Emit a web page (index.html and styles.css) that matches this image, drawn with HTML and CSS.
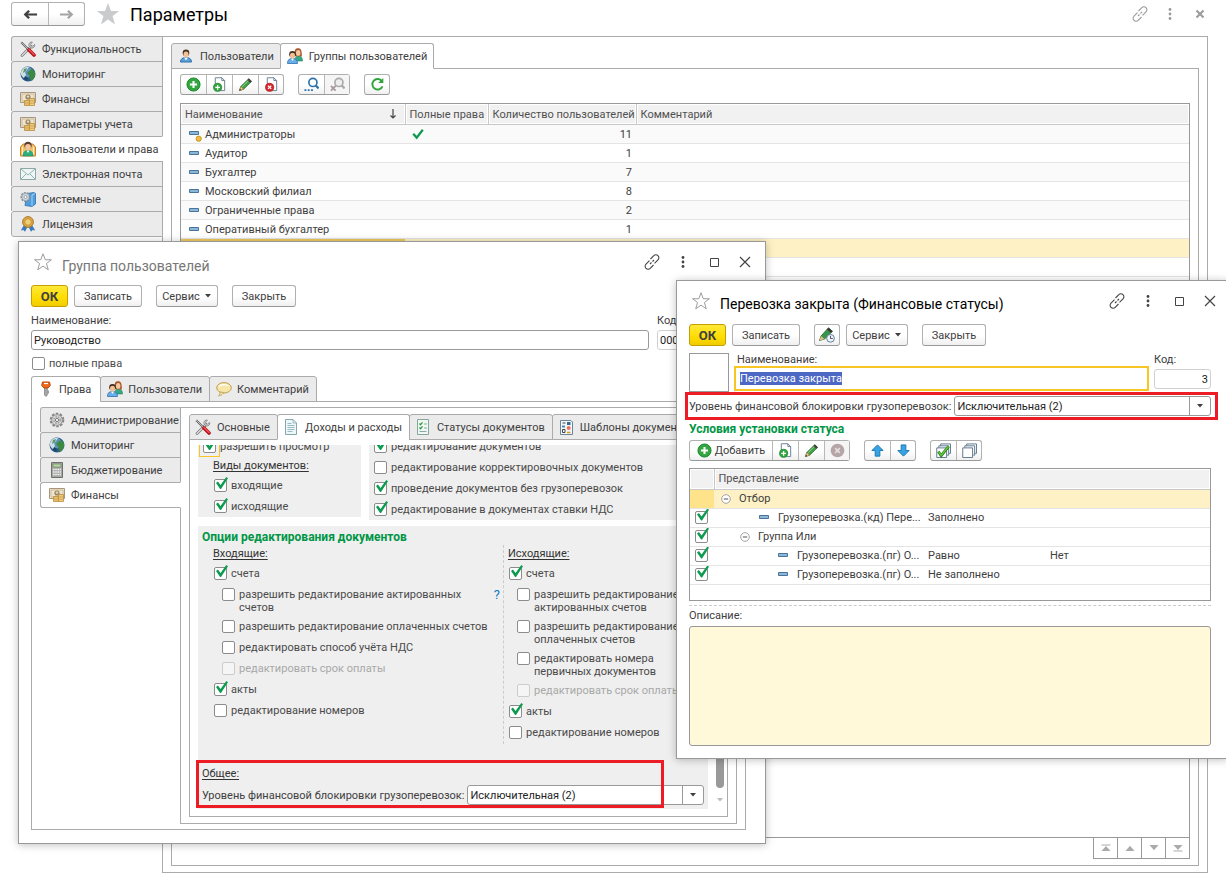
FILE: index.html
```html
<!DOCTYPE html>
<html lang="ru">
<head>
<meta charset="utf-8">
<title>Параметры</title>
<link rel="stylesheet" href="styles.css">
</head>
<body>
<svg class="sprite" aria-hidden="true">
  <symbol id="tools" viewBox="0 0 16 16"><path d="M2 14.500 11 5.500" stroke="#777" stroke-width="2.600" stroke-linecap="round"/><path d="M2 14.500 11 5.500" stroke="#ddd" stroke-width="1.200" stroke-linecap="round"/><path d="M14.600 3.400 12.600 5.200 10.900 4.900 10.600 3.200 12.400 1.200C10.600 .6 8.600 2 8.900 4.500L11 7c2.600.3 4.300-1.600 3.600-3.600Z" fill="#ddd" stroke="#777" stroke-width=".8"/><path d="M1.200 1.200 8.500 8.500" stroke="#666" stroke-width="2"/><path d="M1.200 1.200 8.500 8.500" stroke="#ccc" stroke-width=".8"/><path d="M9 9l5 5" stroke="#b51217" stroke-width="3.600" stroke-linecap="round"/><path d="M9 8.600l5 5" stroke="#f0555a" stroke-width="1.400" stroke-linecap="round"/></symbol>
  <symbol id="globe" viewBox="0 0 16 16"><circle cx="8" cy="8" r="7.500" fill="#2c5f8c"/><circle cx="7" cy="6" r="5.500" fill="#5b93b8"/><path d="M2 4C4 1 7 .5 9 1L7 4 5 6 6 9 4 12C1 10 0 7 2 4Z" fill="#cfe0e4"/><path d="M9 5l3-2 3 3v4l-3 5-2-2-1-4-2-2Z" fill="#3c8a3f"/><path d="M4 3l3-1-1 3-3 2Z" fill="#5a966a"/><path d="M5 10l3 2-1 3-3-2Z" fill="#1f4468"/></symbol>
  <symbol id="money" viewBox="0 0 16 16"><path d="M.5 1.500h15v10H.5Z" fill="#eee4cf" stroke="#a8977a"/><path d="M2 3h12v7H2Z" fill="none" stroke="#c2b294" stroke-width=".8"/><circle cx="8" cy="6" r="2.600" fill="#9a8663"/><circle cx="8" cy="5.600" r="1.200" fill="#e9dcc0"/><path d="M4.500 9.500h5v5h-5Z" fill="#f2cb76" stroke="#b98a3c" stroke-width=".8"/><path d="M9.500 7.500h5v7h-5Z" fill="#f8d98c" stroke="#b98a3c" stroke-width=".8"/><path d="M4.500 11.200h5M4.500 12.900h5M9.500 9.200h5M9.500 10.900h5M9.500 12.700h5" stroke="#c79a48" stroke-width=".8"/></symbol>
  <symbol id="usersec" viewBox="0 0 16 16"><path d="M.5 6 3 3h10l2.500 3v9H.5Z" fill="#f5c065" stroke="#c9852b"/><path d="M2.500 6v8M13.500 6v8" stroke="#fff0c9"/><circle cx="8" cy="4.500" r="3.700" fill="#5d4030"/><circle cx="8" cy="6" r="2.900" fill="#f3c79b"/><path d="M3 15c0-4 2-5.500 5-5.500s5 1.500 5 5.500Z" fill="#2fae7d" stroke="#1c8a60" stroke-width=".6"/><path d="M6.500 9.500 8 12l1.500-2.500Z" fill="#fff"/></symbol>
  <symbol id="mail" viewBox="0 0 16 16"><path d="M.5 2.500h15v11H.5Z" fill="#eef5f4" stroke="#8fa9a9"/><path d="M1 3l7 6 7-6M1 13l5-5M15 13l-5-5" fill="none" stroke="#8fb5b0"/></symbol>
  <symbol id="system" viewBox="0 0 16 16"><path d="M7 2.500 14 1.500l1.500 1V13L12 15.500 5 14.500Z" fill="#4f9fe0" stroke="#2d6ea8" stroke-width=".8"/><path d="M12 4v11M12 4l3-1.500" stroke="#b7dcf8" stroke-width=".8"/><circle cx="5.500" cy="6" r="4.300" fill="#c3cbd2" stroke="#7f8b95" stroke-width="1.400" stroke-dasharray="2 1"/><circle cx="5.500" cy="6" r="3.600" fill="#d5dce2" stroke="#8a959e" stroke-width=".6"/><circle cx="5.500" cy="6" r="1.500" fill="#fff" stroke="#76818a" stroke-width=".7"/></symbol>
  <symbol id="award" viewBox="0 0 16 16"><path d="M4 9 .8 14.500l2.700-.5L5 15.800 7.500 11M12 9l3.200 5.500-2.700-.5-1.500 1.800L8.500 11" fill="#3979bd"/><circle cx="8" cy="6" r="5.400" fill="#dfa840" stroke="#a8792a"/><circle cx="8" cy="6" r="3.300" fill="#f1cd78" stroke="#b98a35" stroke-width=".8"/></symbol>
  <symbol id="user" viewBox="0 0 16 16"><path d="M2.500 14c0-3 2-4.500 5.500-4.500s5.500 1.500 5.500 4.500Z" fill="#5aa0dc" stroke="#2f6fae"/><path d="M6 9.500l2 3 2-3Z" fill="#fff"/><circle cx="8" cy="4.900" r="3.300" fill="#4a3024"/><ellipse cx="8" cy="6.300" rx="2.500" ry="2.900" fill="#f1c093"/></symbol>
  <symbol id="users" viewBox="0 0 16 16"><path d="M8 13c0-4 1-5 3.500-5s4 1.500 4 5Z" fill="#36a884" stroke="#1c8462" stroke-width=".6"/><path d="M7.500 8C7 2 8.500.3 11.200.3S15 2.500 14.800 8.500Z" fill="#a9572c"/><ellipse cx="11.200" cy="4.900" rx="2.200" ry="2.900" fill="#f4c9a0"/><path d="M.5 15.500c0-3.500 1.500-5 5-5s5 1.500 5 5Z" fill="#6aaee6" stroke="#2d6fb1" stroke-width=".8"/><path d="M4 10.500l1.500 2.600L7 10.500Z" fill="#fff"/><circle cx="5.500" cy="6.300" r="3.300" fill="#3d2b23"/><ellipse cx="5.500" cy="7.600" rx="2.500" ry="2.800" fill="#f1c093"/></symbol>
  <symbol id="add" viewBox="0 0 16 16"><circle cx="8" cy="8" r="7" fill="#34a63f" stroke="#16842b"/><path d="M8 4.200v7.600M4.200 8h7.600" stroke="#fff" stroke-width="2.200"/></symbol>
  <symbol id="copy" viewBox="0 0 16 16"><path d="M3.500.8h7l3 3v10.700h-10Z" fill="#fff" stroke="#667d92"/><path d="M10.500.8v3h3" fill="none" stroke="#667d92"/><circle cx="6" cy="11" r="4.300" fill="#34a63f" stroke="#16842b" stroke-width=".8"/><path d="M6 8.500v5M3.500 11h5" stroke="#fff" stroke-width="1.400"/></symbol>
  <symbol id="pencil" viewBox="0 0 16 16"><path d="M1.500 14.500 3 10 11.500 1.800l3 3L6 13Z" fill="#42a047" stroke="#2a6d31" stroke-width=".8"/><path d="M1.500 14.500 3 10l3 3Z" fill="#f1c990" stroke="#9a713c" stroke-width=".6"/><path d="M1.500 14.500l.6-1.800 1.200 1.200Z" fill="#222"/><path d="M10 3.200 11.700 1.500l3 3L13 6.200Z" fill="#4a3b3b"/><path d="M4.500 10.500 11 4" stroke="#8ed18d"/></symbol>
  <symbol id="del" viewBox="0 0 16 16"><path d="M3.500.8h7l3 3v10.700h-10Z" fill="#fff" stroke="#667d92"/><path d="M10.500.8v3h3" fill="none" stroke="#667d92"/><circle cx="6" cy="11" r="4.300" fill="#d9272d" stroke="#aa1218" stroke-width=".8"/><path d="M4.300 9.300l3.400 3.400M7.700 9.300l-3.400 3.400" stroke="#fff" stroke-width="1.400"/></symbol>
  <symbol id="find" viewBox="0 0 16 16"><circle cx="9.500" cy="5.800" r="4.300" fill="#fff" stroke="#2d72aa" stroke-width="1.800"/><path d="M12.600 9l3 3.200" stroke="#2d72aa" stroke-width="2.400"/><path d="M.5 14h2M4 14h2M7.500 14h2" stroke="#2d72aa" stroke-width="2"/></symbol>
  <symbol id="unfind" viewBox="0 0 16 16"><circle cx="9.500" cy="5.800" r="4.300" fill="#eee" stroke="#aaa" stroke-width="1.800"/><path d="M12.600 9l3 3.200" stroke="#aaa" stroke-width="2.400"/><path d="M1 9.500l5 5M6 9.500l-5 5" stroke="#a79a9a" stroke-width="2"/></symbol>
  <symbol id="refresh" viewBox="0 0 16 16"><path d="M12.300 4A5.600 5.600 0 1 0 13.300 10" fill="none" stroke="#2ea338" stroke-width="2"/><path d="M14.200 1v5.500H8.700Z" fill="#2ea338"/></symbol>
  <symbol id="star" viewBox="0 0 24 24"><path d="M12 1l3 8h8.200l-6.600 5 2.400 8.400L12 17.500 5 22.400 7.400 14 .8 9H9Z"/></symbol>
  <symbol id="link" viewBox="0 0 16 16"><g fill="none" stroke="currentColor" stroke-width="1.100"><path d="M6.500 5l3.300-3.300a2.900 2.900 0 0 1 4.200 0c1.200 1.200 1.200 3 0 4.200L10.500 9.300"/><path d="M9.500 11l-3.300 3.300a2.900 2.900 0 0 1-4.200 0c-1.200-1.200-1.200-3 0-4.200L5.500 6.700"/><path d="M6 10 7.500 8.500M8.500 7.500 10 6"/></g></symbol>
  <symbol id="dots" viewBox="0 0 16 16"><circle cx="8" cy="3.500" r="1.400"/><circle cx="8" cy="8" r="1.400"/><circle cx="8" cy="12.500" r="1.400"/></symbol>
  <symbol id="square" viewBox="0 0 16 16"><path d="M4.500 4.500h8v8h-8Z" fill="none" stroke="currentColor" stroke-width="1"/></symbol>
  <symbol id="close" viewBox="0 0 16 16"><path d="M3 3l10 10M13 3 3 13" stroke="currentColor" stroke-width="1.200"/></symbol>
  <symbol id="closebold" viewBox="0 0 16 16"><path d="M4.500 4.500l7 7M11.500 4.500l-7 7" stroke="currentColor" stroke-width="2"/></symbol>
  <symbol id="left" viewBox="0 0 16 16"><path d="M15 8H3" stroke="currentColor" stroke-width="2.200"/><path d="M6.500 4 2.500 8l4 4" fill="none" stroke="currentColor" stroke-width="2.600"/></symbol>
  <symbol id="right" viewBox="0 0 16 16"><path d="M1 8h12" stroke="currentColor" stroke-width="2.200"/><path d="M9.500 4l4 4-4 4" fill="none" stroke="currentColor" stroke-width="2.600"/></symbol>
  <symbol id="tick" viewBox="0 0 16 16"><path d="M2.500 6.500l4 4.500 7-9" fill="none" stroke="#0e9b50" stroke-width="2.600"/></symbol>
  <symbol id="dash" viewBox="0 0 12 8"><path d="M1.500 1.500h9v3h-9Z" fill="#8db7d6" stroke="#49749a"/></symbol>
  <symbol id="dashdot" viewBox="0 0 14 14"><path d="M1.500 3.500h9v3h-9Z" fill="#8db7d6" stroke="#49749a"/><circle cx="10.700" cy="10.700" r="2.600" fill="#f3bd3a" stroke="#b9891c" stroke-width=".8"/></symbol>
  <symbol id="node" viewBox="0 0 12 12"><circle cx="6" cy="6" r="4.300" fill="#fff" stroke="#999" stroke-width=".9"/><path d="M3.800 6h4.400" stroke="#555"/></symbol>
  <symbol id="key" viewBox="0 0 16 16"><path d="M6.500 5h2.800v9L8 15.500 6.500 14Z" fill="#aaa" stroke="#777" stroke-width=".7"/><path d="M9.300 9.500H11v3H9.300" fill="#999"/><path d="M4.500 1h7l.8 3.500L10 7H6L3.700 4.500Z" fill="#ee6a1a" stroke="#b74508"/><path d="M6 2.500h4" stroke="#fff" stroke-width="1.200"/></symbol>
  <symbol id="bubble" viewBox="0 0 16 16"><ellipse cx="8" cy="6.800" rx="7.300" ry="5.200" fill="#f8e6a8" stroke="#b99f51"/><path d="M4 11c.3 1.500-.5 3-1.500 4C5.500 14.500 7 13 7.500 11.500Z" fill="#f8e6a8" stroke="#b99f51" stroke-width=".8"/><path d="M3 5.500C5 3.200 10 3 12.500 5" fill="none" stroke="#fff" stroke-width="1.200"/></symbol>
  <symbol id="gear" viewBox="0 0 16 16"><circle cx="8" cy="8" r="6.300" fill="#d0d0d0" stroke="#858585" stroke-width="2" stroke-dasharray="2.500 1.460"/><circle cx="8" cy="8" r="5.200" fill="#ddd" stroke="#969696" stroke-width=".8"/><circle cx="8" cy="8" r="3.200" fill="none" stroke="#999" stroke-width="1.400" stroke-dasharray="1.600 1"/><circle cx="8" cy="8" r="1.600" fill="#fff" stroke="#777"/></symbol>
  <symbol id="calc" viewBox="0 0 16 16"><path d="M2.500.5h11v15h-11Z" fill="#a7a9a7" stroke="#6e706e"/><path d="M4 2h8v3H4Z" fill="#b9d8a1" stroke="#637b55" stroke-width=".6"/><path d="M4 7.500h8M4 10h8M4 12.500h8" stroke="#eee" stroke-width="1.400" stroke-dasharray="1.600 .6"/></symbol>
  <symbol id="doc" viewBox="0 0 16 16"><path d="M2.500.5H10L13.500 4v11.500h-11Z" fill="#eef7f7" stroke="#87a6ab"/><path d="M10 .5V4h3.500M4.500 4.500h4M4.500 6.500h7M4.500 8.500h7M4.500 10.500h7M4.500 12.500h5" fill="none" stroke="#8fb3bf" stroke-width=".9"/></symbol>
  <symbol id="statusdoc" viewBox="0 0 16 16"><path d="M2.500.5h11v15h-11Z" fill="#eef7f2" stroke="#87a69b"/><path d="M4.500 4.500l1 1.200 2-2.400M4.500 8.500l1 1.200 2-2.400" fill="none" stroke="#249b35" stroke-width="1.200"/><path d="M9 5h3M9 9h3M4.500 12.500h7" stroke="#8aa"/></symbol>
  <symbol id="template" viewBox="0 0 16 16"><path d="M2.500 1.500H13L14.500 3v12.500h-12Z" fill="#f4f7fa" stroke="#6d8596"/><path d="M4.500 4h3M4.500 10.500h2.500v3H4.500Z" stroke="#444" fill="none"/><path d="M9 3h3.500v3H9Z" fill="#35698f"/><circle cx="10.700" cy="9" r="2" fill="#f0705e"/><path d="M4 6.500h3v2H4Z" fill="#4f8ab0"/><path d="M9 13.500H12.500" stroke="#d6a21d" stroke-width="1.600"/></symbol>
  <symbol id="penclock" viewBox="0 0 16 16"><path d="M.5 13.500 2 9 9.500.800l4 3.500L5.500 12Z" fill="#37964a" stroke="#2a5d31" stroke-width=".8"/><path d="M.5 13.500 2 9l3.500 3Z" fill="#e7bd84"/><path d="M8 2.500 9.500.8l4 3.500L12 6Z" fill="#3d3535"/><circle cx="11.500" cy="11.300" r="3.900" fill="#eef5fa" stroke="#637f96"/><path d="M11.500 8.800v2.700h2.300" fill="none" stroke="#446" stroke-width=".9"/></symbol>
  <symbol id="nodel" viewBox="0 0 16 16"><circle cx="8" cy="8" r="7.300" fill="#b5a5a7"/><path d="M5.500 5.500l5 5M10.500 5.500l-5 5" stroke="#e5dedf" stroke-width="1.800"/></symbol>
  <symbol id="up" viewBox="0 0 16 16"><path d="M8 2 14 8h-3.500v6h-5V8H2Z" fill="#36a3e5" stroke="#1d76b0"/></symbol>
  <symbol id="down" viewBox="0 0 16 16"><path d="M8 14 2 8h3.500V2h5v6H14Z" fill="#36a3e5" stroke="#1d76b0"/></symbol>
  <symbol id="checkall" viewBox="0 0 16 16"><path d="M5 3V1h10.500v10H14M3 5V3h10.500v10H12" fill="none" stroke="#59728a"/><path d="M.8 5.200h10.500v10.300H.8Z" fill="#fff" stroke="#59728a"/><path d="M2.500 9l3 4.500L13.500 3.500" fill="none" stroke="#2c7a20" stroke-width="3"/><path d="M2.800 9.200l2.700 3.800L13.300 3.800" fill="none" stroke="#5cc93c" stroke-width="1.600"/></symbol>
  <symbol id="uncheckall" viewBox="0 0 16 16"><path d="M5 3V1h10.500v10H14M3 5V3h10.500v10H12" fill="none" stroke="#59728a"/><path d="M.8 5.200h10.500v10.300H.8Z" fill="#fff" stroke="#59728a"/></symbol>
  <symbol id="caret" viewBox="0 0 8 6"><path d="M1 1h6L4 4.500Z" fill="currentColor"/></symbol>
  <symbol id="tri-up" viewBox="0 0 12 8"><path d="M1.500 7 6 1.800 10.500 7Z" fill="#aaa"/></symbol>
  <symbol id="tri-down" viewBox="0 0 12 8"><path d="M1.500 1 6 6.200 10.500 1Z" fill="#aaa"/></symbol>
  <symbol id="tri-top" viewBox="0 0 12 8"><path d="M1.500 7 6 2 10.500 7ZM1.500.5h9v1h-9Z" fill="#aaa"/></symbol>
  <symbol id="tri-end" viewBox="0 0 12 8"><path d="M1.500 1 6 6 10.500 1ZM1.500 6.500h9v1h-9Z" fill="#aaa"/></symbol>
  <symbol id="sort" viewBox="0 0 8 12"><path d="M4 1v9M1.500 7.500 4 10l2.500-2.500" fill="none" stroke="#444" stroke-width="1.200"/></symbol>
</svg>

<main class="page">
  <header class="page-head">
    <div class="btn-group history">
      <button aria-label="Назад"><svg class="icon"><use href="#left"/></svg></button>
      <button aria-label="Вперёд" class="off"><svg class="icon"><use href="#right"/></svg></button>
    </div>
    <svg class="page-star"><use href="#star"/></svg>
    <h1>Параметры</h1>
    <div class="win-tools muted">
      <button aria-label="Ссылка"><svg class="icon"><use href="#link"/></svg></button>
      <button aria-label="Меню"><svg class="icon"><use href="#dots"/></svg></button>
      <button aria-label="Закрыть"><svg class="icon"><use href="#closebold"/></svg></button>
    </div>
  </header>

  <div class="side-layout grow">
    <nav class="side-tabs main-tabs">
      <button><svg class="icon"><use href="#tools"/></svg>Функциональность</button>
      <button><svg class="icon"><use href="#globe"/></svg>Мониторинг</button>
      <button><svg class="icon"><use href="#money"/></svg>Финансы</button>
      <button><svg class="icon"><use href="#money"/></svg>Параметры учета</button>
      <button class="active"><svg class="icon"><use href="#usersec"/></svg>Пользователи и права</button>
      <button><svg class="icon"><use href="#mail"/></svg>Электронная почта</button>
      <button><svg class="icon"><use href="#system"/></svg>Системные</button>
      <button><svg class="icon"><use href="#award"/></svg>Лицензия</button>
    </nav>
    <section class="side-panel">
      <div class="tabs">
        <button><svg class="icon"><use href="#user"/></svg>Пользователи</button>
        <button class="active"><svg class="icon"><use href="#users"/></svg>Группы пользователей</button>
      </div>
      <div class="tab-panel groups">
        <div class="toolbar">
          <div class="btn-group">
            <button aria-label="Добавить"><svg class="icon"><use href="#add"/></svg></button>
            <button aria-label="Скопировать"><svg class="icon"><use href="#copy"/></svg></button>
            <button aria-label="Изменить"><svg class="icon"><use href="#pencil"/></svg></button>
            <button aria-label="Удалить"><svg class="icon"><use href="#del"/></svg></button>
          </div>
          <div class="btn-group">
            <button aria-label="Найти"><svg class="icon"><use href="#find"/></svg></button>
            <button aria-label="Отменить поиск" class="off"><svg class="icon"><use href="#unfind"/></svg></button>
          </div>
          <div class="btn-group">
            <button aria-label="Обновить"><svg class="icon"><use href="#refresh"/></svg></button>
          </div>
        </div>
        <div class="grid-box grow">
          <table class="grid">
            <colgroup><col class="c-name"><col class="c-full"><col class="c-count"><col></colgroup>
            <thead><tr><th><span class="sorted">Наименование<svg class="sort"><use href="#sort"/></svg></span></th><th>Полные права</th><th>Количество пользователей</th><th>Комментарий</th></tr></thead>
            <tbody>
              <tr><td><span class="item"><svg class="icon"><use href="#dashdot"/></svg>Администраторы</span></td><td><svg class="icon tick"><use href="#tick"/></svg></td><td class="num">11</td><td></td></tr>
              <tr><td><span class="item"><svg class="dash"><use href="#dash"/></svg>Аудитор</span></td><td></td><td class="num">1</td><td></td></tr>
              <tr><td><span class="item"><svg class="dash"><use href="#dash"/></svg>Бухгалтер</span></td><td></td><td class="num">7</td><td></td></tr>
              <tr><td><span class="item"><svg class="dash"><use href="#dash"/></svg>Московский филиал</span></td><td></td><td class="num">8</td><td></td></tr>
              <tr><td><span class="item"><svg class="dash"><use href="#dash"/></svg>Ограниченные права</span></td><td></td><td class="num">2</td><td></td></tr>
              <tr><td><span class="item"><svg class="dash"><use href="#dash"/></svg>Оперативный бухгалтер</span></td><td></td><td class="num">1</td><td></td></tr>
              <tr class="selected"><td></td><td></td><td></td><td></td></tr>
              <tr><td></td><td></td><td></td><td></td></tr>
            </tbody>
          </table>
        </div>
        <div class="pager">
          <button aria-label="В начало"><svg><use href="#tri-top"/></svg></button>
          <button aria-label="Вверх"><svg><use href="#tri-up"/></svg></button>
          <button aria-label="Вниз"><svg><use href="#tri-down"/></svg></button>
          <button aria-label="В конец"><svg><use href="#tri-end"/></svg></button>
        </div>
      </div>
    </section>
  </div>
</main>

<section class="window group-window">
  <header class="win-head">
    <svg class="win-star"><use href="#star"/></svg>
    <h2>Группа пользователей</h2>
    <div class="win-tools">
      <button aria-label="Ссылка"><svg class="icon"><use href="#link"/></svg></button>
      <button aria-label="Меню"><svg class="icon"><use href="#dots"/></svg></button>
      <button aria-label="Развернуть"><svg class="icon"><use href="#square"/></svg></button>
      <button aria-label="Закрыть"><svg class="icon"><use href="#close"/></svg></button>
    </div>
  </header>
  <div class="commands">
    <button class="btn ok">ОК</button>
    <button class="btn wide">Записать</button>
    <button class="btn service">Сервис<svg class="caret"><use href="#caret"/></svg></button>
    <button class="btn leave">Закрыть</button>
  </div>
  <div class="group-fields">
    <div class="field"><label for="g-name">Наименование:</label><input id="g-name" class="text" value="Руководство"></div>
    <div class="field code"><label for="g-code">Код:</label><input id="g-code" class="text pale" value="000000004"></div>
  </div>
  <label class="check full"><input type="checkbox"><span>полные права</span></label>
  <div class="tabs win-tabs">
    <button class="active"><svg class="icon"><use href="#key"/></svg>Права</button>
    <button><svg class="icon"><use href="#users"/></svg>Пользователи</button>
    <button><svg class="icon"><use href="#bubble"/></svg>Комментарий</button>
  </div>
  <div class="tab-panel rights grow">
    <div class="side-layout grow">
      <nav class="side-tabs rights-tabs">
        <button><svg class="icon"><use href="#gear"/></svg>Администрирование</button>
        <button><svg class="icon"><use href="#globe"/></svg>Мониторинг</button>
        <button><svg class="icon"><use href="#calc"/></svg>Бюджетирование</button>
        <button class="active"><svg class="icon"><use href="#money"/></svg>Финансы</button>
      </nav>
      <section class="side-panel">
        <div class="tabs doc-tabs">
          <button><svg class="icon"><use href="#tools"/></svg>Основные</button>
          <button class="active"><svg class="icon"><use href="#doc"/></svg>Доходы и расходы</button>
          <button><svg class="icon"><use href="#statusdoc"/></svg>Статусы документов</button>
          <button><svg class="icon"><use href="#template"/></svg>Шаблоны документов</button>
        </div>
        <div class="tab-panel scroller grow">
          <div class="scroll-view">
            <div class="cards">
              <div class="card view-card">
                <label class="check focus"><input type="checkbox" checked><span>разрешить просмотр</span></label>
                <div class="indent">
                  <h4>Виды документов:</h4>
                  <label class="check"><input type="checkbox" checked><span>входящие</span></label>
                  <label class="check"><input type="checkbox" checked><span>исходящие</span></label>
                </div>
              </div>
              <div class="card edit-card">
                <label class="check"><input type="checkbox" checked><span>редактирование документов</span></label>
                <label class="check"><input type="checkbox"><span>редактирование корректировочных документов</span></label>
                <label class="check"><input type="checkbox" checked><span>проведение документов без грузоперевозок</span></label>
                <label class="check"><input type="checkbox" checked><span>редактирование в документах ставки НДС</span></label>
              </div>
            </div>
            <div class="card options">
              <h3>Опции редактирования документов</h3>
              <div class="option-cols">
                <div class="incoming">
                  <h4>Входящие:</h4>
                  <label class="check"><input type="checkbox" checked><span>счета</span></label>
                  <div class="sub">
                    <div class="with-help"><label class="check"><input type="checkbox"><span>разрешить редактирование актированных счетов</span></label><button class="help">?</button></div>
                    <label class="check"><input type="checkbox"><span>разрешить редактирование оплаченных счетов</span></label>
                    <label class="check"><input type="checkbox"><span>редактировать способ учёта НДС</span></label>
                    <label class="check"><input type="checkbox" disabled><span>редактировать срок оплаты</span></label>
                  </div>
                  <label class="check"><input type="checkbox" checked><span>акты</span></label>
                  <label class="check"><input type="checkbox"><span>редактирование номеров</span></label>
                </div>
                <div class="outgoing">
                  <h4>Исходящие:</h4>
                  <label class="check"><input type="checkbox" checked><span>счета</span></label>
                  <div class="sub">
                    <label class="check"><input type="checkbox"><span>разрешить редактирование<br>актированных счетов</span></label>
                    <label class="check"><input type="checkbox"><span>разрешить редактирование<br>оплаченных счетов</span></label>
                    <label class="check"><input type="checkbox"><span>редактировать номера<br>первичных документов</span></label>
                    <label class="check"><input type="checkbox" disabled><span>редактировать срок оплаты</span></label>
                  </div>
                  <label class="check"><input type="checkbox" checked><span>акты</span></label>
                  <label class="check"><input type="checkbox"><span>редактирование номеров</span></label>
                </div>
              </div>
              <div class="common">
                <h4>Общее:</h4>
                <div class="level">
                  <label for="g-level">Уровень финансовой блокировки грузоперевозок:</label>
                  <div class="combo"><select id="g-level"><option>Исключительная (2)</option></select><svg class="caret"><use href="#caret"/></svg></div>
                </div>
                <div class="marker"></div>
              </div>
            </div>
          </div>
          <div class="scrollbar"><div class="thumb"></div><svg class="caret"><use href="#caret"/></svg></div>
        </div>
      </section>
    </div>
  </div>
</section>

<section class="window status-window">
  <header class="win-head">
    <svg class="win-star"><use href="#star"/></svg>
    <h2>Перевозка закрыта (Финансовые статусы)</h2>
    <div class="win-tools">
      <button aria-label="Ссылка"><svg class="icon"><use href="#link"/></svg></button>
      <button aria-label="Меню"><svg class="icon"><use href="#dots"/></svg></button>
      <button aria-label="Развернуть"><svg class="icon"><use href="#square"/></svg></button>
      <button aria-label="Закрыть"><svg class="icon"><use href="#close"/></svg></button>
    </div>
  </header>
  <div class="commands">
    <button class="btn ok">ОК</button>
    <button class="btn wide">Записать</button>
    <button class="btn square" aria-label="История изменений"><svg class="icon"><use href="#penclock"/></svg></button>
    <button class="btn service">Сервис<svg class="caret"><use href="#caret"/></svg></button>
    <button class="btn leave">Закрыть</button>
  </div>
  <div class="status-fields">
    <div class="swatch"></div>
    <div class="field"><label for="s-name">Наименование:</label><input id="s-name" class="text current" value="Перевозка закрыта" autofocus></div>
    <div class="field code"><label for="s-code">Код:</label><input id="s-code" class="text pale" value="3"></div>
  </div>
  <div class="level">
    <label for="s-level">Уровень финансовой блокировки грузоперевозок:</label>
    <div class="combo"><select id="s-level"><option>Исключительная (2)</option></select><svg class="caret"><use href="#caret"/></svg></div>
    <div class="marker"></div>
  </div>
  <h3>Условия установки статуса</h3>
  <div class="toolbar">
    <div class="btn-group">
      <button class="labelled"><svg class="icon"><use href="#add"/></svg>Добавить</button>
      <button aria-label="Скопировать"><svg class="icon"><use href="#copy"/></svg></button>
      <button aria-label="Изменить"><svg class="icon"><use href="#pencil"/></svg></button>
      <button aria-label="Удалить" class="off"><svg class="icon"><use href="#nodel"/></svg></button>
    </div>
    <div class="btn-group">
      <button aria-label="Вверх"><svg class="icon"><use href="#up"/></svg></button>
      <button aria-label="Вниз"><svg class="icon"><use href="#down"/></svg></button>
    </div>
    <div class="btn-group">
      <button aria-label="Отметить все"><svg class="icon"><use href="#checkall"/></svg></button>
      <button aria-label="Снять отметки"><svg class="icon"><use href="#uncheckall"/></svg></button>
    </div>
  </div>
  <div class="grid-box grow">
    <table class="grid conditions">
      <colgroup><col class="c-check"><col class="c-repr"><col class="c-kind"><col></colgroup>
      <thead><tr><th></th><th colspan="3">Представление</th></tr></thead>
      <tbody>
        <tr class="selected"><td></td><td><span class="item l0"><svg class="node"><use href="#node"/></svg>Отбор</span></td><td></td><td></td></tr>
        <tr><td><input type="checkbox" checked aria-label="Использовать"></td><td><span class="item l2"><svg class="dash"><use href="#dash"/></svg>Грузоперевозка.(кд) Пере...</span></td><td>Заполнено</td><td></td></tr>
        <tr><td><input type="checkbox" checked aria-label="Использовать"></td><td><span class="item l1"><svg class="node"><use href="#node"/></svg>Группа Или</span></td><td></td><td></td></tr>
        <tr><td><input type="checkbox" checked aria-label="Использовать"></td><td><span class="item l3"><svg class="dash"><use href="#dash"/></svg>Грузоперевозка.(пг) О...</span></td><td>Равно</td><td>Нет</td></tr>
        <tr><td><input type="checkbox" checked aria-label="Использовать"></td><td><span class="item l3"><svg class="dash"><use href="#dash"/></svg>Грузоперевозка.(пг) О...</span></td><td>Не заполнено</td><td></td></tr>
      </tbody>
    </table>
  </div>
  <div class="splitter"></div>
  <label for="s-note">Описание:</label>
  <textarea id="s-note"></textarea>
</section>
<script src="main.js"></script>
</body>
</html>
```

FILE: main.js
```js
const nameInput = document.getElementById("s-name");
nameInput.focus();
nameInput.select();
```

FILE: styles.css
```css
* { box-sizing: border-box; }

html, body { height: 100%; }

body {
  margin: 0;
  position: relative;
  overflow: hidden;
  background: #fff;
  color: #404040;
  font: 11px/13px Roboto, "Liberation Sans", sans-serif;
}

button, input, select, textarea { font: inherit; color: inherit; }
button { margin: 0; padding: 0; border: 0; background: none; }
h1, h2, h3, h4 { margin: 0; font-weight: 400; }
svg { display: block; flex: none; }

.sprite { position: absolute; width: 0; height: 0; }
.icon { width: 16px; height: 16px; }
.caret { width: 8px; height: 6px; }
.grow { flex: 1; min-height: 0; }

.page { height: 100%; padding: 0 18px 8px 11px; display: flex; flex-direction: column; }

.page-head { height: 36px; flex: none; display: flex; align-items: flex-start; padding-top: 2px; }
.page-head h1 { color: #000; font-size: 18px; line-height: 26px; flex: 1; }
.page-star { width: 24px; height: 24px; margin: 0 10px 0 11px; fill: #c9cbcd; }

.btn-group {
  display: flex;
  border: 1px solid #b0b0b0;
  border-bottom-color: #999;
  border-radius: 3px;
  background: linear-gradient(#fff 50%, #f0f0f0);
}
.btn-group button { width: 26px; height: 19px; display: flex; align-items: center; justify-content: center; }
.btn-group button:first-child, .btn-group button:last-child { width: 25px; }
.btn-group button:only-child { width: 24px; }
.btn-group button + button { border-left: 1px solid #b8b8b8; }
.btn-group .icon { width: 15px; height: 15px; }
.btn-group .off { background: #f5f5f5; }
.btn-group .labelled:first-child { width: 82px; gap: 3px; }
.btn-group.history button { width: 36px; height: 22px; }
.btn-group.history .off { color: #a5a5a5; background: none; }

.win-tools { display: flex; gap: 15px; color: #444; fill: #444; }
.win-tools.muted { color: #9a9a9a; fill: #9a9a9a; padding-top: 4px; gap: 14px; }
.win-tools button { color: inherit; }

.side-layout { display: flex; }
.side-tabs { flex: none; position: relative; z-index: 1; }
.main-tabs { width: 152px; margin-right: -1px; }
.rights-tabs { width: 141px; margin-right: -1px; }
.side-tabs button {
  width: 100%;
  height: 25px;
  display: flex;
  align-items: center;
  gap: 6px;
  padding: 0 0 0 8px;
  border: 1px solid #ababab;
  border-bottom-width: 0;
  border-radius: 3px 0 0 0;
  background: #ebebeb;
}
.side-tabs button:last-child { height: 26px; border-bottom-width: 1px; border-radius: 3px 0 0 3px; }
.side-tabs .active { background: #fff; border-right-color: #fff; }
.side-panel {
  flex: 1;
  min-width: 0;
  border: 1px solid #ababab;
  padding: 6px 8px;
  display: flex;
  flex-direction: column;
}

.tabs { display: flex; position: relative; z-index: 1; margin-bottom: -1px; }
.tabs button {
  height: 26px;
  display: flex;
  align-items: center;
  gap: 6px;
  padding: 0 6px;
  border: 1px solid #ababab;
  border-radius: 3px 3px 0 0;
  background: #ebebeb;
  white-space: nowrap;
}
.tabs button + button { margin-left: -1px; }
.tabs .active { background: #fff; border-bottom-color: #fff; }
.tab-panel { border: 1px solid #ababab; display: flex; flex-direction: column; }

.groups { flex: 1; padding: 5px 8px 6px; min-height: 0; }
.toolbar { display: flex; gap: 14px; }
.groups .toolbar { margin-bottom: 8px; }

.grid-box { border: 1px solid #999; background: #fff; overflow: hidden; }
.grid { width: 100%; border-collapse: collapse; table-layout: fixed; }
.grid th {
  height: 20px;
  padding: 0 4px;
  border-right: 1px solid #c8c8c8;
  border-bottom: 1px solid #c8c8c8;
  box-shadow: inset 0 0 0 1px #fff;
  background: #f1f1f1;
  color: #505050;
  font-weight: 400;
  text-align: left;
  white-space: nowrap;
}
.grid th:last-child { border-right: 0; }
.grid td { height: 19px; padding: 0 4px; border-bottom: 1px solid #e4e4e4; white-space: nowrap; }
.groups .grid th { padding-top: 1px; }
.groups .grid td { padding-top: 2px; }
.groups tbody tr:nth-child(odd) { background: #fafafa; }
.grid tbody tr.selected { background: #fef1c5; }
.groups .selected td:first-child { box-shadow: inset 0 2px #f0cb5a; }
.c-name { width: 224px; }
.c-full { width: 83px; }
.c-count { width: 148px; }
.num { text-align: right; }
.sorted { display: flex; justify-content: space-between; padding-right: 4px; }
.sort { width: 8px; height: 12px; }
.item { display: flex; align-items: center; gap: 5px; }
.groups .item { padding-left: 3px; }
.groups .item .icon { width: 14px; height: 14px; margin-right: -2px; }
.dash { width: 12px; height: 8px; }
.node { width: 12px; height: 12px; }
.tick { height: 14px; margin-left: 1px; }

.pager { display: flex; align-self: flex-end; margin-top: -1px; border: 1px solid #999; }
.pager button { width: 24px; height: 20px; display: grid; place-items: center; background: #fff; }
.pager button:first-child { width: 23px; }
.pager button + button { border-left: 1px solid #999; }
.pager svg { width: 12px; height: 8px; }

.window {
  position: absolute;
  isolation: isolate;
  display: flex;
  flex-direction: column;
  border: 1px solid #999;
  background: #fff;
  box-shadow: 0 1px 8px rgba(0, 0, 0, .25);
}
.group-window { left: 18px; top: 241px; width: 748px; height: 603px; padding: 9px 19px 13px 12px; }
.status-window { left: 676px; top: 280px; right: -2px; height: 479px; padding: 9px 16px 12px 12px; }

.win-head { height: 26px; display: flex; align-items: flex-start; }
.win-head h2 { flex: 1; font-size: 14px; line-height: 18px; padding-top: 6px; color: #777; }
.status-window .win-head h2 { color: #000; padding-top: 5px; }
.win-star { width: 18px; height: 18px; margin: 2px 10px 0 3px; fill: #fff; stroke: #999; stroke-width: 1.300; }
.win-tools { padding-top: 3px; }
.group-window .win-tools, .status-window .win-tools { margin-right: -7px; }

.commands { display: flex; gap: 6px; margin: 8px 0 7px; }
.btn {
  height: 22px;
  padding: 0 10px;
  border: 1px solid #b0b0b0;
  border-bottom-color: #999;
  border-radius: 3px;
  background: linear-gradient(#fff 50%, #f0f0f0);
  display: flex;
  align-items: center;
  justify-content: center;
  gap: 4px;
}
.ok { width: 37px; padding: 0; border-color: #c3a000; background: linear-gradient(#ffe83a, #fd0 60%, #f0cc00); font-size: 13px; font-weight: 700; }
.wide { width: 68px; margin-right: 8px; }
.square { width: 26px; padding: 0; }
.service { width: 62px; padding: 0; }
.leave { width: 64px; margin-left: 8px; }

.field { display: flex; flex-direction: column; min-width: 0; }
.text {
  width: 100%;
  height: 20px;
  padding: 0 2px;
  border: 1px solid #999;
  border-radius: 3px;
  background: #fff;
  color: #222;
}
.pale { border-color: #d0d0d0; }
.current { height: 25px; padding: 0 4px; border: 2px solid #f8c624; border-radius: 0; outline: 0; }
.current::selection { background: #4d67c4; color: #fff; }

.group-fields { display: flex; gap: 8px; }
.group-fields .field { flex: 1; gap: 3px; }
.group-fields .code { flex: none; width: 89px; }
.full { margin: 3px 0 2px; }

.check { min-height: 21px; display: flex; align-items: flex-start; gap: 4px; padding-top: 4px; color: #4a4a4a; }
.check:has(:disabled) { color: #a8a8a8; }
input[type=checkbox] {
  appearance: none;
  flex: none;
  position: relative;
  width: 13px;
  height: 13px;
  margin: 0;
  border: 1px solid #8c8c8c;
  border-radius: 2px;
  background: #fff;
}
input[type=checkbox]:disabled { border-color: #ccc; background: #f5f5f5; }
input[type=checkbox]:checked::after {
  content: "";
  position: absolute;
  left: 1px;
  top: -3px;
  width: 12px;
  height: 12px;
  background: #0e9b50;
  clip-path: polygon(0 50%, 16% 38%, 38% 66%, 86% 0, 100% 10%, 42% 100%, 34% 100%);
}
.check input { margin-left: 1px; }

.win-tabs button { gap: 5px; padding: 0 7px 0 6px; }
.win-tabs .active { padding-right: 9px; }
.rights { padding: 5px 8px; }
.doc-tabs button { padding: 0 7px 0 5px; }
.scroller { flex-direction: row; padding: 5px 3px 6px 6px; }
.scroll-view { flex: 1; min-width: 0; overflow: hidden; padding-left: 2px; }
.scrollbar { width: 16px; display: flex; flex-direction: column; align-items: center; padding: 0 0 7px 8px; color: #bbb; }
.thumb { width: 8px; flex: 1; margin-bottom: 9px; border-radius: 0 0 4px 4px; background: #999; }

.cards { display: flex; gap: 8px; align-items: flex-start; margin-top: -11px; }
.card { background: #efefef; }
.view-card { width: 163px; padding: 2px 4px 0; }
.edit-card { flex: 1; padding: 2px 4px 0; }
.indent { padding-left: 11px; }
.focus input::before { content: ""; position: absolute; inset: -5px; border: 1px solid #f8c624; }
h4 { text-decoration: underline; text-underline-offset: 2px; line-height: 18px; color: #333; }
h3 { color: #009646; font-size: 12px; line-height: 16px; font-weight: 700; }

.options { margin-top: 6px; padding: 3px 4px 4px; }
.option-cols { display: flex; padding-left: 11px; }
.option-cols h4 { margin-bottom: 1px; }
.incoming { width: 291px; padding-right: 2px; border-right: 1px dashed #ccc; }
.outgoing { flex: 1; min-width: 0; padding-left: 4px; white-space: nowrap; }
.option-cols .check { padding-top: 3px; padding-bottom: 3px; }
.sub { padding-left: 8px; }
.with-help { display: flex; align-items: flex-start; }
.with-help .check { flex: 1; padding-right: 20px; }
.help { color: #0a7bc4; font-size: 13px; line-height: 15px; padding: 2px 1px 0 0; }
.common { position: relative; margin-top: 21px; }

.level { position: relative; display: flex; align-items: center; gap: 3px; }
.common .level { margin-top: 2px; }
.combo { flex: 1; position: relative; display: flex; align-items: center; }
.combo select {
  appearance: none;
  width: 100%;
  height: 20px;
  padding: 0 22px 0 2px;
  border: 1px solid #999;
  border-radius: 3px;
  background: linear-gradient(#999, #999) right 20px top / 1px 100% no-repeat #fff;
  color: #222;
}
.combo .caret { position: absolute; right: 7px; pointer-events: none; }
.marker { position: absolute; inset: -5px 40px -3px -6px; border: 3px solid #ed1c24; pointer-events: none; }
.status-window .marker { inset: -4px -7px -4px -4px; }

.status-window .commands { margin: 8px 0 7px; }
.status-fields { display: flex; gap: 5px; align-items: flex-start; }
.swatch { width: 40px; height: 39px; border: 1px solid #999; }
.status-fields .field { flex: 1; }
.status-fields .field label { padding-left: 3px; }
.status-fields .code { flex: none; width: 57px; gap: 3px; }
.status-fields .code label { padding-left: 0; }
.status-fields .code input { text-align: right; }
.status-window .level { margin: 4px 0 5px; }
.status-window h3 { margin: 0 0 3px; }
.status-window .toolbar { margin-bottom: 7px; }
.c-check { width: 24px; }
.c-repr { width: 210px; }
.c-kind { width: 122px; }
.conditions .selected td:first-child { background: #ffe38a; }
.conditions td:first-child { padding: 0 0 1px 5px; }
.conditions td:first-child input { display: block; }
.conditions .item { gap: 7px; padding-left: 2px; }
.conditions .l1 { padding-left: 21px; }
.conditions .l2 { padding-left: 40px; gap: 8px; }
.conditions .l3 { padding-left: 59px; gap: 8px; }
.splitter { border-top: 1px dashed #ccc; margin: 4px 0 3px; }
textarea { height: 120px; margin: 4px 0 0; border: 1px solid #999; border-radius: 3px; background: #fff9d9; resize: none; }
```
